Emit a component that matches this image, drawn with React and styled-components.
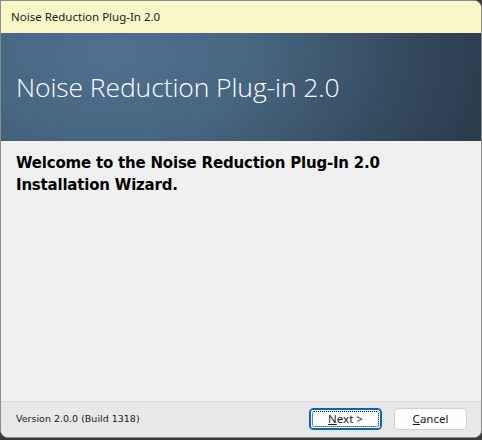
import styled, { createGlobalStyle } from "styled-components";

const Global = createGlobalStyle`
  html, body {
    margin: 0;
    padding: 0;
    background: #3a3a3a;
  }
  * {
    box-sizing: border-box;
  }
`;

const Window = styled.div`
  width: 482px;
  height: 438px;
  display: flex;
  flex-direction: column;
  background: #f0f0f0;
  border: 1px solid #8c8c8c;
  border-radius: 0 8px 8px 8px;
  overflow: hidden;
`;

const TitleBar = styled.div`
  height: 32px;
  flex-shrink: 0;
  display: flex;
  align-items: center;
  padding-left: 10px;
  padding-bottom: 2px;
  background: #f9f6c8;
  font-family: "Noto Sans", "Open Sans", sans-serif;
  font-size: 11.5px;
  color: #1a1a1a;
`;

const Banner = styled.div`
  height: 108px;
  flex-shrink: 0;
  display: flex;
  align-items: center;
  padding-left: 15px;
  padding-bottom: 0;
  background: radial-gradient(
    ellipse 420px 260px at 112px 20px,
    #4f7190 0%,
    #466580 35%,
    #35495e 70%,
    #273744 100%
  );
`;

const Heading = styled.h1`
  margin: 0;
  font-family: "Open Sans", "Noto Sans", sans-serif;
  font-weight: 300;
  font-size: 26.5px;
  letter-spacing: -0.1px;
  color: #ffffff;
`;

const Content = styled.div`
  flex: 1;
  padding: 11px 15px;
`;

const Welcome = styled.p`
  margin: 0;
  font-family: "DejaVu Sans", Verdana, sans-serif;
  font-weight: bold;
  font-size: 15px;
  line-height: 22px;
  letter-spacing: -0.2px;
  color: #000000;
`;

const Footer = styled.div`
  height: 36px;
  flex-shrink: 0;
  display: flex;
  align-items: center;
  padding: 0 14px 2px 15px;
  background: #e8e8e8;
  border-top: 1px solid #dedede;
`;

const Version = styled.span`
  flex: 1;
  font-family: "DejaVu Sans", Tahoma, sans-serif;
  font-size: 9.5px;
  color: #1a1a1a;
`;

const Button = styled.button`
  width: 73px;
  height: 22px;
  margin-left: ${(p) => (p.$gap ? "12px" : "0")};
  padding: 0;
  background: #fdfdfd;
  border: 1px solid ${(p) => (p.$focused ? "#0067c0" : "#d0d0d0")};
  border-radius: 4px;
  font-family: "Noto Sans", "Open Sans", sans-serif;
  font-size: 11.5px;
  color: #1a1a1a;
  display: flex;
  align-items: center;
  justify-content: center;
  position: relative;

  ${(p) =>
    p.$focused &&
    `
    box-shadow: inset 0 0 0 1px #0067c0;
    &::after {
      content: "";
      position: absolute;
      inset: 2px;
      border: 1px dotted #000;
      border-radius: 2px;
    }
  `}
`;

const Key = styled.span`
  text-decoration: underline;
`;

export default function App() {
  return (
    <>
      <Global />
      <Window>
        <TitleBar>Noise Reduction Plug-In 2.0</TitleBar>
        <Banner>
          <Heading>Noise Reduction Plug-in 2.0</Heading>
        </Banner>
        <Content>
          <Welcome>
            Welcome to the Noise Reduction Plug-In 2.0
            <br />
            Installation Wizard.
          </Welcome>
        </Content>
        <Footer>
          <Version>Version 2.0.0 (Build 1318)</Version>
          <Button $focused>
            <Key>N</Key>ext &gt;
          </Button>
          <Button $gap>
            <Key>C</Key>ancel
          </Button>
        </Footer>
      </Window>
    </>
  );
}
